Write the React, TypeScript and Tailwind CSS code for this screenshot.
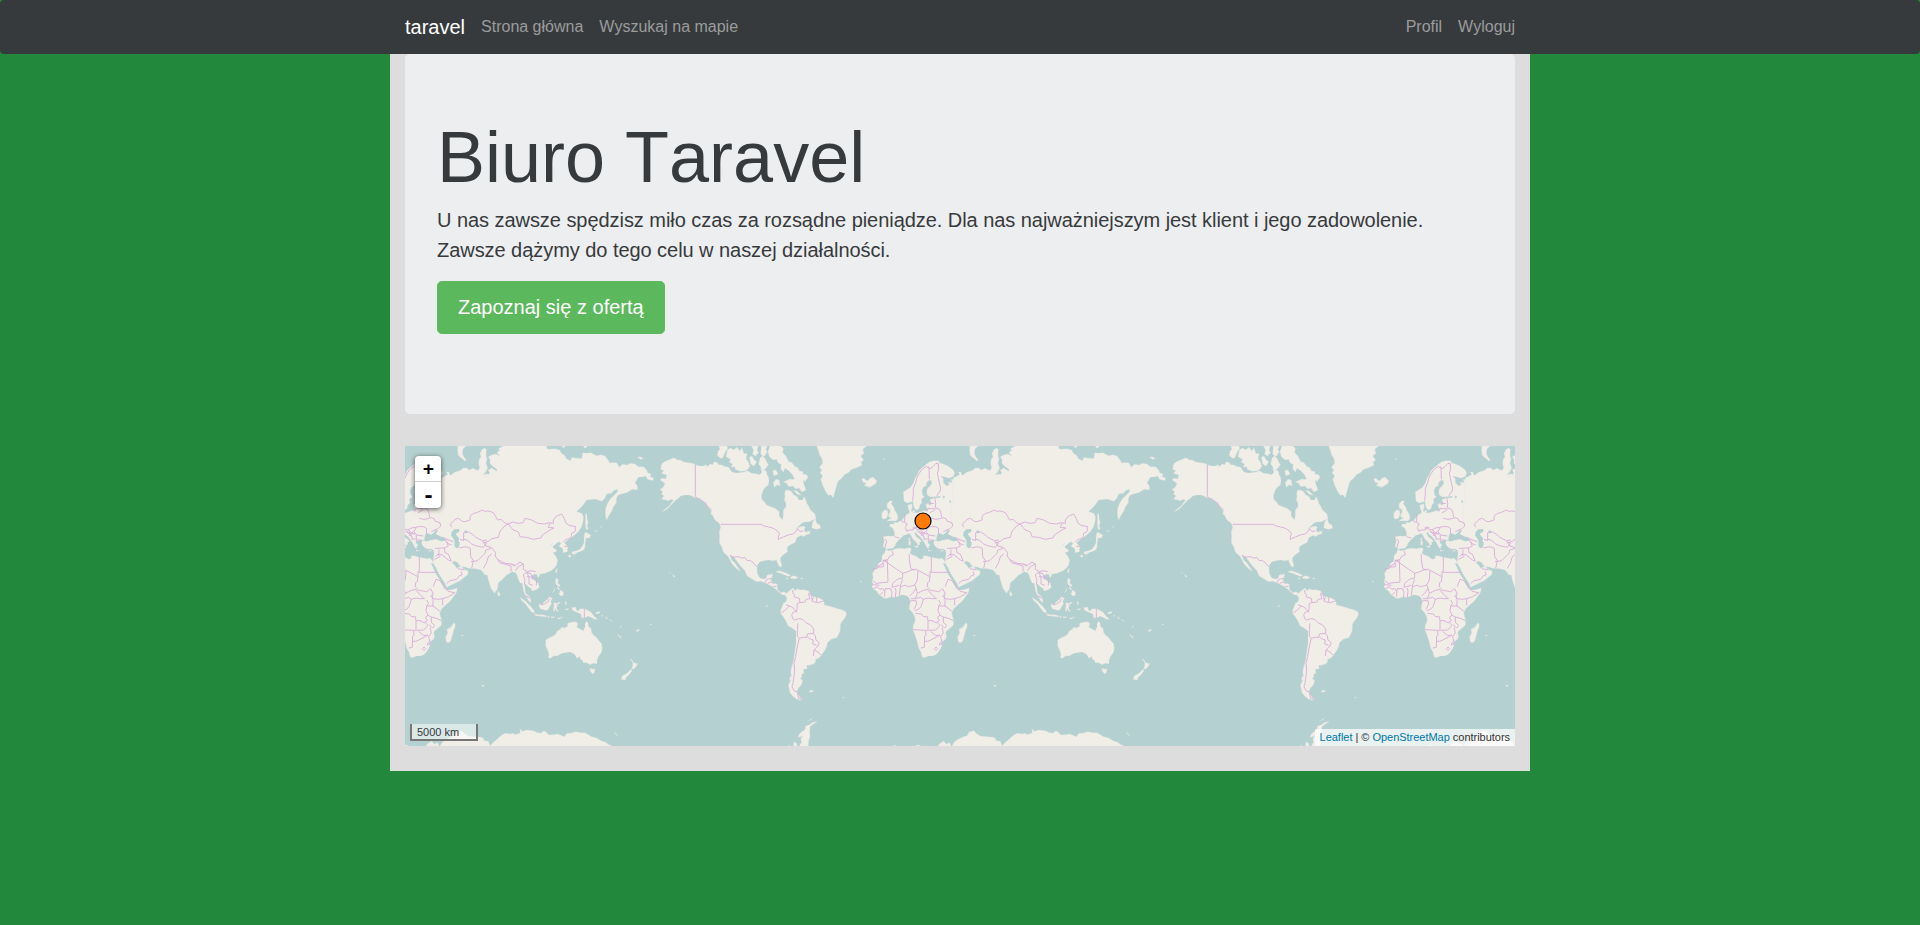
import React from "react";

type Region = { x: number; y: number; land: string; water?: string; borders: string };

// Each region holds its outlines in a local grid; three grid units make one map pixel.
const regions: Region[] = [
  // North America, Greenland and the British Isles
  {
    x: 0,
    y: 0,
    land:
      "M5,72L12,66 20,62 33,58 38,54 45,55 52,60 60,60 72,66 85,68 97,70 106,74 118,78 130,78 138,74 143,80 150,72 158,74 162,66 170,66 176,74 185,75 196,80 205,80 215,95 228,99 240,98 252,96 262,92 275,100 288,101 300,104 306,96 303,84 314,90 320,95 321,104 325,110 327,122 325,135 316,142 310,150 305,164 305,178 312,184 320,195 332,200 345,205 358,215 357,226 362,235 368,239 370,226 370,210 378,200 378,190 373,180 375,170 374,158 378,150 388,151 395,155 401,164 412,170 416,180 428,180 432,170 437,178 440,190 446,198 450,208 458,216 465,222 468,236 448,245 432,246 425,250 410,265 422,260 430,258 436,262 432,270 437,277 446,275 452,280 440,284 430,290 424,286 410,293 405,308 395,312 385,318 381,325 383,335 372,343 362,352 361,362 365,372 364,382 357,378 352,368 350,360 338,362 325,360 312,362 300,365 292,375 291,388 292,400 297,410 302,415 312,417 318,415 322,405 338,402 336,412 332,420 340,430 352,432 352,448 362,458 372,455 380,460 378,466 366,464 350,450 335,438 322,433 315,428 302,424 290,425 275,416 262,408 258,400 255,392 245,382 235,370 228,360 220,350 210,346 215,360 224,368 232,380 242,394 235,390 225,382 215,370 209,358 205,350 190,336 186,322 178,308 179,290 178,275 182,262 178,250 165,240 158,226 152,222 155,215 145,202 135,190 128,182 120,178 110,174 100,170 88,165 75,165 62,168 56,174 45,182 34,194 25,205 12,212 5,216 16,206 28,198 40,180 33,178 25,183 18,180 5,177 12,168 4,162 8,155 0,148 10,142 15,130 0,120 6,115 18,116 20,105 4,100 12,92 2,88Z M176,18H200L204,24 196,35 190,50 184,56 176,50 172,46 174,34 180,28Z M202,30L212,24 222,30 230,22 240,32 246,23 251,40 262,42 258,55 266,68 270,80 258,92 240,94 226,88 224,80 213,82 218,72 207,66 212,58 198,50Z M268,52L276,48 281,58 290,65 282,78 272,72Z M274,18H295L291,30 296,38 286,48 278,42 281,30Z M300,55L306,48 315,55 325,75 315,88 304,92 302,80 296,72Z M304,18H322L317,28 322,36 312,50 302,42Z M330,18H362L370,24 368,38 378,48 385,64 396,68 405,80 412,82 418,92 430,95 428,102 440,104 444,112 436,124 430,120 432,134 438,150 425,156 418,145 405,146 400,138 386,140 380,130 370,126 388,118 404,118 396,102 386,92 375,85 370,96 362,86 364,74 354,68 350,58 340,60 328,50 324,34Z M340,128L348,118 358,120 360,138 352,134 343,142Z M400,150L412,154 424,166 412,163Z M338,92L348,90 354,102 342,108Z M458,246L466,236 470,250 480,256 482,265 470,268 455,264Z M438,276L452,272 446,283Z M470,18H620L608,28 612,40 602,48 611,60 603,66 606,76 588,84 575,88 565,98 553,104 545,115 535,122 530,136 526,150 520,173 512,164 505,166 498,156 490,140 482,118 488,108 480,98 486,90 478,82 488,70 486,56 479,44 474,28Z M605,118L612,113 616,120 624,122 632,113 640,112 650,122 648,130 636,138 628,142 612,136 620,130 610,127Z M681,192L688,184 697,182 694,192 701,200 704,210 710,220 714,230 712,239 706,243 690,242 680,244 688,237 695,235 686,230 686,222 691,216 690,208 682,205Z M666,218L674,210 682,211 684,222 680,234 672,238 665,234Z M347,396L356,392 368,395 380,400 393,407 382,409 373,404 360,399Z M396,409L404,407 415,413 404,417 390,414Z M422,414H428V417H422Z M378,414H384V417H378Z M38,404L46,409 42,412Z M28,398H32V400H28Z M670,55L674,58 670,60Z",
    borders:
      "M106,74V168L112,176 120,176 128,184 138,190 143,200 155,210 M182,253H303L312,258 325,261 338,264 345,268 352,272 358,280 355,292 354,298 372,290 388,284 400,282 408,274 412,265 420,275 430,272 M210,346L222,352 235,350 245,354 255,353 262,362 270,361 278,366 284,374 291,380 M315,428L320,418 335,415 M322,432L330,426 342,430 M340,440L350,438",
  },
  // South America and the Antarctic Peninsula
  {
    x: 0,
    y: 450,
    land:
      "M372,10L378,12 385,5 394,-2 400,-6 405,2 412,-4 420,0 432,-1 445,2 450,10 455,18 468,22 480,25 488,30 492,38 494,46 504,47 520,52 534,56 547,60 558,66 559,75 552,88 544,97 541,105 541,120 536,133 530,143 515,147 502,158 500,170 494,182 485,194 477,204 466,208 467,216 460,222 448,226 440,226 442,236 430,238 432,248 424,254 426,262 420,264 428,272 424,284 415,295 411,303 414,312 420,322 430,326 420,330 408,326 398,318 390,308 388,298 385,285 392,272 388,266 394,256 392,245 395,230 400,215 403,195 405,180 408,160 408,123 396,114 385,108 378,94 370,80 363,72 362,60 366,52 370,40 378,35 381,24Z M448,302L460,300 458,306 450,307Z M318,46H322V50H318Z M548,320L554,324 550,325Z M472,395L460,402 450,410 449,425 450,440 446,452 445,468H418L425,456 422,446 428,438 414,442 418,432 425,426 436,418 436,409 448,404 458,397Z M400,468L402,456 410,460 412,468Z M444,392L460,384 450,391Z M386,466H390V468H386Z",
    borders:
      "M398,0L398,8 404,16 402,20 418,25 420,38 412,40 M420,38L435,36 438,28 450,26 446,12 448,8 M365,68L376,60 388,48 378,44 M388,48L398,52 404,60 410,65 M412,40L410,65 400,66 395,75 398,86 404,90 416,86 428,88 438,98 452,105 458,112 462,122 460,130 442,132 440,142 430,142 418,145 412,138 412,118 414,100 M418,145L414,160 410,180 407,200 402,220 404,240 402,260 399,280 396,290 402,302 412,306 416,325 428,326 M460,130L466,138 468,150 478,158 474,168 462,180 460,198 M462,180L474,186 482,195 M442,142L452,148 460,150 458,162 470,166 M448,10L456,20 456,34 472,38 488,34 M470,22V36 M456,30L462,22",
  },
  // Europe
  {
    x: 600,
    y: 0,
    land:
      "M70,290L82,288 100,289 104,286 103,276 98,264 88,258 91,252 103,252 101,247 112,248 120,242 126,240 134,230 138,224 148,220 148,214 145,206 143,196 155,191 157,202 153,213 160,217 170,219 180,216 192,212 202,212 204,206 200,204 198,193 206,188 210,196 215,190 209,180 216,176 228,174 240,173 242,168 225,170 212,171 203,166 200,158 202,146 210,138 216,130 213,121 204,122 199,130 200,136 190,142 186,152 188,164 193,170 184,178 186,188 180,194 177,206 170,210 165,208 160,195 159,184 150,187 140,189 132,182 131,170 130,155 138,151 152,142 160,130 165,115 172,104 177,92 185,84 193,78 200,72 208,66 220,62 236,62 238,68 250,72 264,78 277,88 284,97 281,108 268,115 252,110 242,108 250,116 250,128 260,138 268,134 264,126 276,128 274,118 284,118 290,108 300,106 295,96 303,96 305,107 480,100V330L262,324 258,336 255,330 252,325 240,328 228,322 221,312 222,304 228,300 218,300 209,304 203,300 204,308 210,316 206,320 206,326 200,322 196,312 189,302 182,292 170,282 168,276 163,280 170,292 180,298 184,306 178,306 180,311 174,318 170,308 158,296 152,284 146,280 140,284 131,286 126,292 118,298 108,310 105,318 98,325 85,326 80,328 74,322 69,320 73,304Z M162,318L174,318 173,324Z M146,302H152V315H146Z M146,294H150V300H146Z M204,330L216,332 205,334Z M242,332L252,330 246,335Z M158,211H164V216H158Z",
    water: "M268,180L274,184 272,189 268,186Z M248,170L252,166 255,172 251,176Z",
    borders:
      "M158,182L160,160 160,146 167,128 170,115 178,100 184,90 190,85 198,80 207,82 212,86 222,76 228,70 237,72 M207,82L208,118 M235,72L236,88 232,100 236,120 240,136 242,150 230,168 M225,176L227,190 226,202 240,210 243,220 245,232 258,236 262,244 276,248 278,258 270,266 250,275 M200,215L205,205 214,206 225,205 M203,192L222,190 M210,218L222,212 228,206 M136,222L134,235 134,248 142,252 136,262 140,274 148,270 160,270 160,262 172,262 M120,240L132,247 M160,264L180,270 190,264 202,262 212,260 228,260 236,266 235,282 M214,235L228,238 245,235 M175,275L188,278 184,286 192,288 192,298 202,296 M180,268L192,280 202,282 M205,262L198,275 206,285 226,288 M205,285L205,300 220,300 M172,272L180,280 192,283 194,275 M104,290L118,294 M76,296L80,304 75,322",
  },
  // Asia
  {
    x: 771,
    y: 0,
    land:
      "M110,112L120,110 130,103 138,106 150,96 165,92 175,84 186,84 192,90 205,85 218,92 224,84 221,72 222,60 228,50 225,40 232,28 238,24 244,28 243,45 246,58 243,70 248,85 240,98 233,104 238,112 250,110 254,100 250,90 260,84 275,94 276,88 262,78 255,70 255,58 250,50 262,44 272,42 285,48 276,38 284,30 280,26 294,18 300,10H420L428,28 450,26 464,30 468,38 480,48 484,56 497,62 500,52 512,54 530,56 533,38 545,40 558,38 575,47 588,44 600,48 612,64 612,68 635,68 643,82 652,73 668,75 675,70 690,72 700,80 715,80 725,90 728,98 738,102 735,110 747,114 742,122 728,118 722,108 716,110 700,112 690,128 697,138 697,150 682,148 665,158 648,162 640,165 634,175 634,188 625,200 620,214 612,226 605,240 601,225 602,205 608,190 615,178 625,168 638,155 637,148 625,152 620,160 605,162 600,175 590,184 570,177 545,180 538,190 530,200 515,215 522,217 530,220 535,228 535,240 530,260 520,275 505,288 494,296 478,308 488,320 487,335 475,338 473,325 462,319 468,310 462,305 452,312 443,320 438,316 444,308 438,314 446,325 455,330 452,336 444,338 452,348 458,360 455,375 448,385 438,392 420,400 406,402 400,406 390,402 378,408 380,416 390,422 400,430 403,442 396,448 385,452 380,452 380,447 370,440 365,435 358,430 360,445 362,460 374,470 378,484 376,488 368,478 358,460 354,445 352,430 345,428 340,418 336,405 332,398 322,395 305,405 290,420 280,428 277,448 268,460 258,445 250,420 247,405 240,405 235,398 228,390 212,386 190,385 178,380 165,378 158,368 146,362 142,370 150,376 155,385 165,380 170,374 174,386 190,394 188,404 178,412 165,422 145,432 125,442 120,430 110,415 100,398 92,382 84,368 86,350 88,330 60,320 100,250Z M542,220L546,224 546,235 550,248 546,256 550,268 543,268 541,250Z M540,276L548,280 558,286 552,294 542,294 542,302 540,312 540,322 536,330 528,334 518,337 510,342 500,342 502,335 515,332 525,328 532,318 537,308 537,296 538,285Z M490,344L497,346 498,352 492,352Z M505,340L512,340 508,345Z M452,390L457,385 455,398 451,398Z M397,403L405,404 401,412 396,409Z M278,452L286,462 283,469 278,466Z M158,18H184L174,26 172,40 176,50 184,60 180,63 170,55 160,46 158,34Z M452,415L460,418 458,430 466,436 462,440 452,432Z M465,450L475,455 475,466 468,468 461,462 465,456Z M456,440L462,444 464,452 458,446Z M442,458L450,444 448,452Z M698,52L705,50 716,56 706,58Z M535,18H546V22L538,24Z M470,18H482L475,24Z M568,276L572,272 578,270 574,274Z M585,262L592,256 588,262Z",
    water:
      "M58,298L60,286 66,278 74,283 80,284 86,278 94,270 99,272 92,282 104,288 118,295 122,302 108,304 94,298 78,300 68,304 58,304Z M140,276L148,268 162,267 164,274 152,282 158,290 163,296 160,302 164,308 162,322 154,325 148,318 149,304 144,295 138,286Z M180,270L188,274 184,280 178,276Z",
    borders:
      "M140,262L136,254 150,238 160,235 172,244 180,245 195,240 196,228 202,222 225,214 230,210 242,215 248,212 265,218 270,226 278,240 288,238 298,248 310,252 322,246 340,250 355,248 360,235 380,240 398,250 418,252 432,248 445,250 445,240 455,228 470,222 478,236 482,248 492,256 512,260 510,275 500,280 498,295 484,298 475,305 M310,252L318,262 325,270 340,276 345,290 365,292 385,298 408,294 412,285 435,270 447,264 430,262 434,250 M310,252L296,260 285,274 280,292 260,296 250,304 236,308 242,318 258,322 272,338 270,348 280,360 300,370 320,372 332,376 345,366 355,372 340,380 332,392 M355,372L355,388 368,395 378,392 392,395 M165,298L176,302 176,278 190,276 202,282 212,292 232,302 245,300 M175,298L186,300 200,312 215,318 235,322 245,310 232,305 M163,324L182,320 196,325 197,350 205,362 200,385 M198,365L218,362 232,348 240,340 242,330 258,325 M235,385L244,370 250,350 260,342 M278,358L284,368 318,378 318,395 M318,372L330,378 M355,404L365,396 378,402 384,412 395,420 394,436 M355,405L360,420 358,434 M365,396L372,412 372,432 384,436 M365,410L388,412 M90,325L118,324 130,318 124,304 M112,292L130,300 145,305 M118,296L130,312 140,314 M118,324L120,338 130,342 138,362 M92,350L102,340 102,328 M88,358L105,350 98,342 112,345 130,360 140,364 M125,430L135,422 155,418 162,408 172,404 168,394 M158,386L178,390 M362,466L372,474 M478,320L488,318",
  },
  // Africa
  {
    x: 600,
    y: 240,
    land:
      "M78,88L86,92 98,90 108,86 120,85 135,86 148,83 154,87 150,98 155,104 168,108 175,114 182,118 190,114 190,107 202,108 212,112 225,114 235,116 248,115 256,128 252,132 248,130 256,144 262,158 270,172 276,180 280,192 288,200 295,210 308,210 320,206 328,205 325,218 318,228 308,242 294,254 280,268 275,280 278,290 281,303 280,316 270,325 260,332 257,340 260,350 256,358 246,366 246,378 238,392 228,404 218,408 205,408 192,413 186,410 183,396 176,384 172,366 166,348 159,330 160,316 166,302 164,290 158,278 148,268 148,258 152,246 149,238 146,232 142,228 130,225 122,225 115,229 105,232 90,232 75,236 66,230 55,222 50,214 42,208 36,200 40,192 36,185 40,172 37,162 44,150 52,140 54,132 66,122 66,108 74,98Z M318,308L322,312 321,322 316,334 312,350 308,364 300,369 294,364 293,350 299,340 297,328 308,322Z M340,346H346V348H340Z M0,184H5V186H0Z",
    borders:
      "M96,92L100,104 88,110 84,118 70,122 68,132 54,138 52,145 38,148 M70,130L70,140 52,142 M70,122L82,122 84,186 48,190 38,182 M70,120L128,160 142,156 158,148 170,148 M148,102L148,118 150,132 152,145 162,152 M170,150L176,152 210,170 210,155 214,155 214,112 M214,157H266 M210,170L208,185 203,188 202,200 210,210 218,212 M128,160L128,174 112,178 98,190 96,202 118,196 M128,178L122,195 118,225 M40,194L58,196 M42,206L52,200 60,208 68,205 74,214 76,206 92,206 96,220 94,234 M68,216L62,224 M74,214L74,230 M106,204L108,214 106,232 M124,200L134,196 148,200 164,195 168,205 158,220 148,228 M164,195L172,180 174,152 M168,205L172,220 166,236 M172,220L188,212 202,208 M202,208L216,224 228,236 M218,212L236,215 248,206 256,222 248,228 256,236 270,238 284,236 M256,200L260,188 264,178 276,182 290,198 286,205 M290,204L300,214 320,218 302,230 284,236 M253,238L254,226 M284,236V256 M152,242L168,242 170,252 162,268 M152,236L166,236 182,232 190,238 204,234 216,236 230,236 M190,238L184,258 176,268 164,272 M166,280L184,282 190,290 202,290 204,302 216,302 228,308 238,302 232,292 240,286 234,272 236,258 242,250 236,240 M236,258L255,258 276,274 M255,258V238 M240,286L252,292 262,294 280,302 M250,292L250,308 260,316 254,324 244,314 M160,329L196,331 228,330 M204,302V328 M197,332L198,345 194,348 193,382 182,384 M194,364L204,364 216,358 228,352 238,344 M212,334L224,345 242,348 M228,330L240,316 230,306 M246,322L250,338 242,350 246,366 M223,386L228,381 233,386 228,391Z M238,370L243,366 245,374 239,375Z",
  },
  // Indonesia and Oceania
  {
    x: 771,
    y: 450,
    land:
      "M545,93L549,100 551,110 558,115 560,128 566,136 575,143 582,152 590,162 592,175 589,188 580,200 576,212 576,221 564,220 555,224 545,218 535,218 532,210 526,208 524,198 518,205 514,202 508,192 496,186 482,188 470,190 458,197 445,198 438,204 430,203 432,192 428,180 422,168 422,150 432,144 445,138 453,132 456,124 466,118 470,112 480,114 488,108 488,100 500,97 508,95 518,98 518,106 514,110 526,118 535,122 540,110 541,98Z M554,235L562,238 570,236 568,248 562,251 556,244Z M675,204L681,210 686,218 698,221 693,230 686,237 680,236 683,228 684,220Z M678,238L681,242 674,252 664,262 660,270 648,268 652,258 666,250Z M500,53L512,51 514,60 520,64 525,56 538,56 550,62 560,68 566,78 578,88 568,88 558,82 548,78 544,82 530,84 528,72 514,66 504,62Z M572,68L584,64 584,70 574,72Z M344,22L352,26 362,34 372,44 378,50 388,62 388,69 380,66 370,54 362,42 352,34Z M388,71L400,74 412,74 424,77 424,81 408,79 392,77Z M428,79H434V82H428Z M438,80L450,80 448,83 438,83Z M456,85L462,84 474,80 462,88Z M402,42L410,44 418,36 428,28 433,20 442,25 437,34 440,42 434,50 428,61 418,60 406,56 403,50Z M446,38L456,40 466,35 462,42 452,44 460,48 454,52 460,66 454,62 450,54 449,66 445,60 447,48Z M481,34L485,38 483,46 480,40Z M482,56L492,56 488,60 481,59Z M590,76H594V79H590Z M600,80L608,84 606,87Z M612,88L622,94 618,94Z M636,132L650,142 646,143Z M695,120L704,117 700,124 694,124Z M230,285L238,286 234,291Z M735,102H739V105H735Z M646,106L650,112 647,112Z M355,30L358,34 354,34Z",
    borders: "M538,56V84 M408,44L418,42 428,36 434,26 M366,20L374,24",
  },
  // Antarctica
  {
    x: 771,
    y: 450,
    land:
      "M255,468L266,456 278,446 286,438 300,430 315,432 325,430 330,434 345,430 346,416 352,424 366,420 384,422 398,428 408,430 416,422 424,426 430,434 445,434 458,432 468,436 478,440 486,430 498,430 510,425 528,428 540,428 550,434 560,440 575,444 588,452 600,456 612,464 622,468Z M105,468L112,456 126,446 145,438 150,438 156,426 170,422 180,432 190,438 210,440 228,442 234,444 238,452 250,454 256,468Z M62,468L70,460 80,454 88,462 98,458 102,468Z M-70,468L-66,465 -62,468Z M-5,468L3,464 12,468Z M628,428L633,430 640,440Z",
    borders: "",
  },
];

const worldOffsets = [-257, 255, 767];

function WorldMap() {
  return (
    <svg className="block h-[300px] w-full" viewBox="0 0 1110 300" aria-hidden="true">
      <defs>
        <g id="world">
          {regions.map((r, i) => (
            <g key={i} transform={`translate(${r.x} ${r.y})`}>
              <path d={r.land} fill="#f1eee8" stroke="#dbe0dd" strokeWidth="0.8" strokeLinejoin="round" />
            </g>
          ))}
          {regions.map((r, i) => (
            <g key={i} transform={`translate(${r.x} ${r.y})`}>
              {r.water && <path d={r.water} fill="#b5d0d0" />}
              <path d={r.borders} fill="none" stroke="#d9acd9" strokeWidth="2.7" />
            </g>
          ))}
        </g>
      </defs>
      {worldOffsets.map((x) => (
        <use key={x} href="#world" transform={`translate(${x} -6) scale(0.33333)`} />
      ))}
      <circle cx="518" cy="75" r="8" fill="#ff7b08" stroke="#000" strokeWidth="1.2" />
    </svg>
  );
}

function Navbar() {
  return (
    <nav className="h-[54px] rounded bg-[#373a3c]">
      <div className="mx-auto flex h-full w-[1140px] items-center justify-between px-[15px] text-base text-[#9b9c9d] [font-kerning:none]">
        <div className="flex items-center gap-4">
          <a className="text-xl text-white">taravel</a>
          <a>Strona główna</a>
          <a>Wyszukaj na mapie</a>
        </div>
        <div className="flex items-center gap-4">
          <a>Profil</a>
          <a>Wyloguj</a>
        </div>
      </div>
    </nav>
  );
}

function Hero() {
  return (
    <section className="mb-8 h-[360px] rounded-[4.8px] bg-[#eceeef] px-8 py-16 text-[#373a3c]">
      <h1 className="mb-2 text-[72px] leading-[79.2px] font-light [font-kerning:none]">Biuro Taravel</h1>
      <p className="mb-4 text-xl leading-[30px] tracking-[-0.05px]">
        U nas zawsze spędzisz miło czas za rozsądne pieniądze. Dla nas najważniejszym jest klient i jego zadowolenie.
        Zawsze dążymy do tego celu w naszej działalności.
      </p>
      <a className="inline-block rounded-[4.8px] border border-[#5cb85c] bg-[#5cb85c] px-5 py-3 text-xl leading-[26.67px] text-white">
        Zapoznaj się z ofertą
      </a>
    </section>
  );
}

function MapPanel() {
  return (
    <section className="relative h-[300px] overflow-hidden bg-[#b5d0d0]">
      <WorldMap />
      <div className="absolute top-[10px] left-[10px] w-[26px] overflow-visible rounded bg-white text-center font-['DejaVu_Sans_Mono',monospace] font-bold text-black shadow-[0_1px_5px_rgba(0,0,0,0.65)]">
        <div className="h-[26px] border-b border-[#ccc] indent-px text-lg leading-[26px]">+</div>
        <div className="h-[26px] indent-px text-xl leading-[26px]">-</div>
      </div>
      <div className="absolute bottom-[5px] left-[5px] h-[17px] w-[68px] border-2 border-t-0 border-[#777] bg-white/50 px-[5px] pt-[2px] text-[11px] leading-[12px] whitespace-nowrap text-[#373a3c]">
        5000 km
      </div>
      <div className="absolute right-0 bottom-0 h-[17px] bg-white/70 px-[5px] text-[11px] leading-[17px] tracking-[-0.025px] whitespace-nowrap text-[#333]">
        <span className="text-[#0078a8]">Leaflet</span> | © <span className="text-[#0078a8]">OpenStreetMap</span>{" "}
        contributors
      </div>
    </section>
  );
}

export default function App() {
  return (
    <div className="min-h-screen bg-[#22883b] font-['Liberation_Sans',Arial,sans-serif]">
      <Navbar />
      <main className="mx-auto h-[717px] w-[1140px] bg-[#ddd] px-[15px]">
        <Hero />
        <MapPanel />
      </main>
    </div>
  );
}
